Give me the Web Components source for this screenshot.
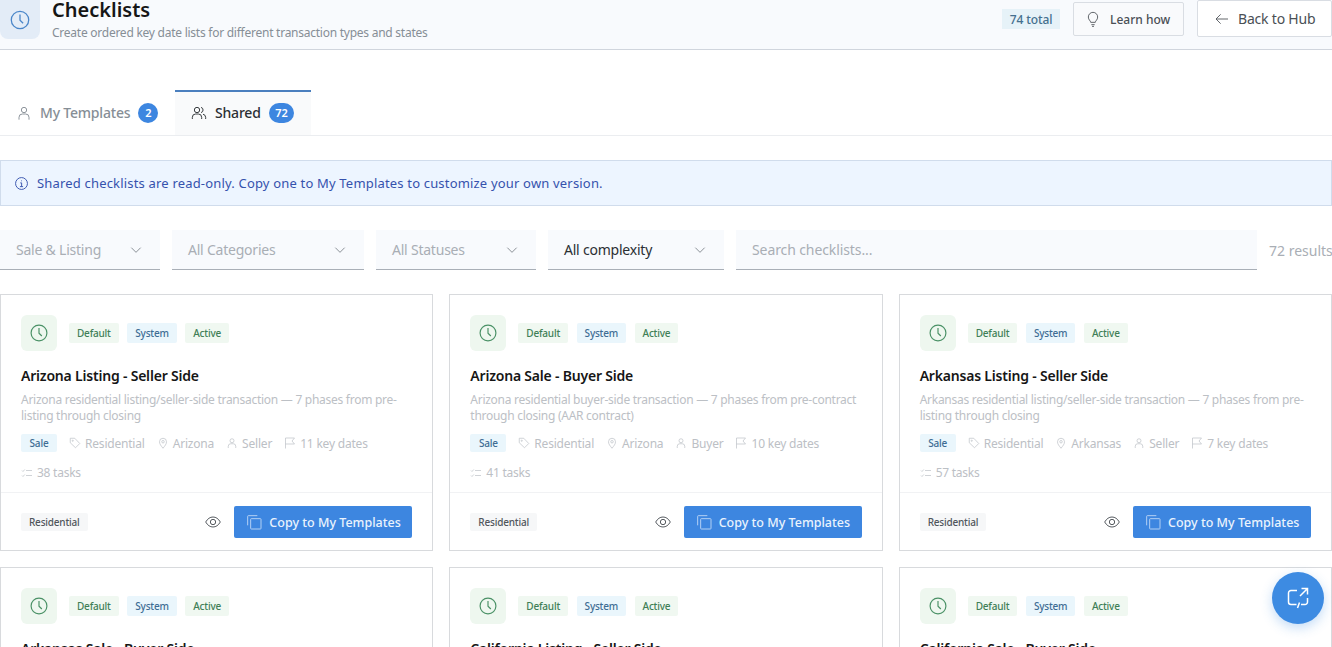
<!DOCTYPE html>
<html lang="en">
<head>
<meta charset="utf-8">
<title>Checklists</title>
<style>
html, body { margin: 0; height: 647px; overflow: hidden; background: #fff; }
body { font-family: "Noto Sans", "Inter", sans-serif; color: #161616; }
</style>
</head>
<body>
<checklists-page></checklists-page>
<script>
const ICONS = {
	clock: '<circle cx="12" cy="12" r="9.5"/><path d="M12 6v6.2l3.4 3.4"/>',
	user: '<circle cx="12" cy="7.5" r="4"/><path d="M4.5 22v-3.5a5 5 0 0 1 5-5h5a5 5 0 0 1 5 5V22"/>',
	users: '<circle cx="9" cy="7.5" r="4"/><path d="M2 21v-2.5a5 5 0 0 1 5-5h4a5 5 0 0 1 5 5V21"/><path d="M15 3.6a4 4 0 0 1 0 7.8"/><path d="M18 13.8a5 5 0 0 1 4 4.7V21"/>',
	info: '<circle cx="12" cy="12" r="9.5"/><path d="M12 7.2v1.2M10 11h2.2v6M9.5 17h5"/>',
	bulb: '<path d="M8.5 17c0-2.5-3.500-3.500-3.500-8a7 7 0 0 1 14 0c0 4.500-3.500 5.500-3.500 8z"/><path d="M9.5 20.500h5M10.500 23h3"/>',
	back: '<path d="M21 12H3.5M10 5l-7 7 7 7"/>',
	chevron: '<path d="M5 8.5l7 7 7-7"/>',
	tag: '<path d="M2.500 2.500h9L21.500 13l-8.500 8.500-10.500-10z"/><circle cx="7.500" cy="7.500" r="1.200"/>',
	pin: '<path d="M12 22.500c-4-5-7-8.500-7-13a7 7 0 0 1 14 0c0 4.500-3 8-7 13z"/><circle cx="12" cy="9.500" r="2.500"/>',
	flag: '<path d="M3 23V2h18l-5 6 5 6H3"/>',
	tasks: '<path d="M2 7l2 2 3.500-4M10 7h12M2 17l2 2 3.500-4M10 17h12"/>',
	eye: '<path d="M1 12c3-5 6.500-7.500 11-7.500S20 7 23 12c-3 5-6.500 7.500-11 7.500S4 17 1 12z"/><circle cx="12" cy="12" r="4"/>',
	copy: '<rect x="7" y="7" width="15.500" height="15.500" rx="1"/><path d="M2.500 17V3.500a1 1 0 0 1 1-1H17"/>',
	chat: '<path d="M11 4.500H5a2.500 2.500 0 0 0-2.500 2.500v9A2.500 2.500 0 0 0 5 18.500h5.500M15 18.500h4a2.500 2.500 0 0 0 2.500-2.500v-4"/><path d="M14 10l7.500-7.500M15.500 2.500h6v6M13.500 16.500L11.500 22"/>'
};

function icon(name, size, weight) {
	return `<svg width="${size}" height="${size}" viewBox="0 0 24 24" fill="none" stroke="currentColor" stroke-width="${weight || 1.5}" aria-hidden="true" style="flex:none">${ICONS[name]}</svg>`;
}

class AppHeader extends HTMLElement {
	constructor() {
		super();
		this.attachShadow({ mode: 'open' }).innerHTML = `
		<style>
		:host { display: flex; align-items: flex-start; height: 49px; background: #f8fafd; border-bottom: 1px solid #d0d5dd; box-sizing: content-box; overflow: hidden; white-space: nowrap; }
		.mark { width: 40px; height: 39px; background: #e3ecf7; border-radius: 0 0 8px 8px; color: #4a86c9; display: flex; align-items: center; justify-content: center; margin-right: 12px; flex: none; }
		.text { flex: 1; }
		h1 { margin: 0; font-size: 20px; line-height: 20px; font-weight: 600; color: #161616; }
		p { margin: 5px 0 0; font-size: 12px; line-height: 16px; letter-spacing: -.25px; color: #868e96; }
		.total { display: flex; align-items: center; width: 58px; height: 20px; justify-content: center; background: #e6f2f8; color: #44708f; font-size: 12px; margin: 9px 13px 0 0; font-weight: 500; letter-spacing: -.1px; }
		.btn { display: flex; align-items: center; background: #fff; border: 1px solid #d9dde3; color: #4a4f55; box-sizing: border-box; }
		.learn { height: 34px; width: 111px; margin: 2px 13px 0 0; padding-left: 11px; gap: 9px; font-size: 12px; border-radius: 2px; background: #f9fafc; font-weight: 500; }
		.hub { height: 37px; width: 135px; padding-left: 16px; gap: 8px; font-size: 14px; letter-spacing: -.2px; border-radius: 2px; }
		</style>
		<div class="mark">${icon('clock', 22, 1.4)}</div>
		<div class="text"><h1>Checklists</h1><p>Create ordered key date lists for different transaction types and states</p></div>
		<span class="total">74 total</span>
		<div class="btn learn">${icon('bulb', 16, 1.3)}<span>Learn how</span></div>
		<div class="btn hub">${icon('back', 16, 1.3)}<span>Back to Hub</span></div>`;
	}
}
customElements.define('app-header', AppHeader);

class TabBar extends HTMLElement {
	constructor() {
		super();
		this.attachShadow({ mode: 'open' }).innerHTML = `
		<style>
		:host { display: flex; height: 45px; margin-top: 40px; border-bottom: 1px solid #ebedf0; font-size: 14px; font-weight: 500; letter-spacing: -.2px; }
		.tab { display: flex; align-items: center; height: 45px; box-sizing: border-box; border-top: 2px solid transparent; padding-bottom: 2px; }
		.mine { width: 175px; padding-left: 16px; color: #868e96; gap: 8px; }
		.shared { width: 136px; padding-left: 16px; background: #f9fafb; border-top-color: #4a7fbe; color: #2b2f33; gap: 8px; }
		.count { background: #3d86e0; color: #fff; font-size: 11px; font-weight: 600; height: 20px; min-width: 20px; padding: 0 6.5px; box-sizing: border-box; border-radius: 10px; display: inline-flex; align-items: center; justify-content: center; letter-spacing: 0; }
		.mine .count { padding: 0 6px; }
		</style>
		<div class="tab mine">${icon('user', 16, 1.4)}<span>My Templates</span><span class="count">2</span></div>
		<div class="tab shared">${icon('users', 16, 1.4)}<span>Shared</span><span class="count">72</span></div>`;
	}
}
customElements.define('tab-bar', TabBar);

class InfoBanner extends HTMLElement {
	constructor() {
		super();
		this.attachShadow({ mode: 'open' }).innerHTML = `
		<style>
		:host { display: flex; align-items: center; gap: 8px; height: 46px; box-sizing: border-box; margin-top: 24px; padding-left: 13px; background: #edf5ff; border: 1px solid #d0dcec; color: #3552ad; font-size: 13px; letter-spacing: .18px; }
		</style>
		${icon('info', 15, 1.5)}<span><slot></slot></span>`;
	}
}
customElements.define('info-banner', InfoBanner);

class FilterSelect extends HTMLElement {
	constructor() {
		super();
		const w = this.getAttribute('width');
		this.attachShadow({ mode: 'open' }).innerHTML = `
		<style>
		:host { display: flex; align-items: center; justify-content: space-between; height: 40px; box-sizing: border-box; width: ${w}px; padding: 0 16px; background: #f8fafd; border-bottom: 1px solid #a9afb7; font-size: 14px; letter-spacing: -.22px; color: #a9aeb5; flex: none; }
		:host([active]) { color: #2b2f33; }
		svg { color: #6f757c; }
		</style>
		<span><slot></slot></span>${icon('chevron', 16, 1.2)}`;
	}
}
customElements.define('filter-select', FilterSelect);

class FilterBar extends HTMLElement {
	constructor() {
		super();
		this.attachShadow({ mode: 'open' }).innerHTML = `
		<style>
		:host { display: flex; gap: 12px; margin-top: 24px; align-items: center; font-size: 14px; white-space: nowrap; }
		.search { flex: none; width: 521px; height: 40px; box-sizing: border-box; display: flex; align-items: center; padding: 0 16px; background: #f8fafd; border-bottom: 1px solid #a9afb7; color: #a9aeb5; letter-spacing: -.1px; }
		.results { color: #a9aeb5; font-size: 14px; }
		</style>
		<slot></slot>
		<div class="search">Search checklists...</div>
		<span class="results">72 results</span>`;
	}
}
customElements.define('filter-bar', FilterBar);

class StatusTag extends HTMLElement {
	constructor() {
		super();
		this.attachShadow({ mode: 'open' }).innerHTML = `
		<style>
		:host { display: inline-flex; align-items: center; justify-content: center; height: 18px; padding: 0 8px; font-size: 10px; font-weight: 500; letter-spacing: -.2px; background: #f0f8f1; color: #3f7f57; border-radius: 2px; flex: none; }
		:host([kind=blue]) { background: #eaf6fc; color: #3e6d94; }
		:host([kind=gray]) { background: #f6f7f8; color: #50565c; }
		:host([tall]) { height: 20px; }
		:host([wide]) { width: 36px; padding: 0; }
		</style><slot></slot>`;
	}
}
customElements.define('status-tag', StatusTag);

class ChecklistCard extends HTMLElement {
	constructor() {
		super();
		const a = (n) => this.getAttribute(n);
		this.attachShadow({ mode: 'open' }).innerHTML = `
		<style>
		:host { display: block; height: 257px; box-sizing: border-box; background: #fff; border: 1px solid #d8dadd; color: #161616; overflow: hidden; }
		.top { display: flex; align-items: center; gap: 8.5px; padding: 20px 20px 0; }
		.mark { width: 36px; height: 36px; border-radius: 6px; background: #eef7ef; color: #4a9166; display: flex; align-items: center; justify-content: center; margin-right: 3.5px; }
		h3 { margin: 16px 20px 0; font-size: 14px; line-height: 18px; font-weight: 600; letter-spacing: -.2px; color: #161616; }
		.desc { margin: 7px 20px 0; font-size: 12px; line-height: 16px; letter-spacing: -.27px; color: #bcc0c5; height: 32px; }
		.meta { display: flex; align-items: center; gap: 12px; margin: 10px 20px 0; font-size: 12px; letter-spacing: -.2px; color: #bcc0c5; height: 18px; white-space: nowrap; }
		.meta span { display: inline-flex; align-items: center; gap: 4px; }
		.tasks { display: flex; align-items: center; gap: 4px; margin: 13px 20px 0; font-size: 12px; line-height: 16px; letter-spacing: -.25px; color: #bcc0c5; }
		.foot { display: flex; align-items: center; margin-top: 11px; border-top: 1px solid #f1f2f4; padding: 13px 20px 0; white-space: nowrap; }
		.eye { margin-left: auto; color: #3c4248; display: flex; margin-right: 13px; }
		.copy { display: flex; align-items: center; gap: 7px; width: 178px; height: 32px; box-sizing: border-box; padding-left: 12px; background: #3d86e0; color: #eaf3fd; font-size: 12.5px; font-weight: 500; border-radius: 2px; }
		.copy svg { color: #bcd6f5; }
		</style>
		<div class="top">
			<div class="mark">${icon('clock', 20, 1.4)}</div>
			<status-tag tall>Default</status-tag><status-tag kind="blue" tall>System</status-tag><status-tag tall>Active</status-tag>
		</div>
		<h3>${a('name')}</h3>
		<div class="desc">${a('desc')}</div>
		<div class="meta">
			<status-tag kind="blue" wide>Sale</status-tag>
			<span>${icon('tag', 12, 1.4)}Residential</span>
			<span>${icon('pin', 12, 1.4)}${a('state')}</span>
			<span>${icon('user', 12, 1.4)}${a('side')}</span>
			<span>${icon('flag', 12, 1.4)}${a('dates')} key dates</span>
		</div>
		<div class="tasks">${icon('tasks', 12, 1.4)}${a('tasks')} tasks</div>
		<div class="foot">
			<status-tag kind="gray">Residential</status-tag>
			<div class="eye">${icon('eye', 16, 1.3)}</div>
			<div class="copy">${icon('copy', 16, 1.4)}Copy to My Templates</div>
		</div>`;
	}
}
customElements.define('checklist-card', ChecklistCard);

class ChatFab extends HTMLElement {
	constructor() {
		super();
		this.attachShadow({ mode: 'open' }).innerHTML = `
		<style>
		:host { position: fixed; left: 1272px; top: 572px; width: 52px; height: 52px; border-radius: 50%; background: #3d8be2; color: #fff; display: flex; align-items: center; justify-content: center; box-shadow: 0 4px 12px rgba(61,139,226,.3); }
		</style>${icon('chat', 24, 1.5)}`;
	}
}
customElements.define('chat-fab', ChatFab);

class ChecklistsPage extends HTMLElement {
	constructor() {
		super();
		const cards = [
			['Arizona Listing - Seller Side', 'Arizona residential listing/seller-side transaction — 7 phases from pre-listing through closing', 'Arizona', 'Seller', 11, 38],
			['Arizona Sale - Buyer Side', 'Arizona residential buyer-side transaction — 7 phases from pre-contract through closing (AAR contract)', 'Arizona', 'Buyer', 10, 41],
			['Arkansas Listing - Seller Side', 'Arkansas residential listing/seller-side transaction — 7 phases from pre-listing through closing', 'Arkansas', 'Seller', 7, 57],
			['Arkansas Sale - Buyer Side', '', 'Arkansas', 'Buyer', 7, 50],
			['California Listing - Seller Side', '', 'California', 'Seller', 7, 50],
			['California Sale - Buyer Side', '', 'California', 'Buyer', 7, 50]
		];
		const cardHtml = cards.map((c) => `<checklist-card name="${c[0]}" desc="${c[1]}" state="${c[2]}" side="${c[3]}" dates="${c[4]}" tasks="${c[5]}"></checklist-card>`).join('');
		this.attachShadow({ mode: 'open' }).innerHTML = `
		<style>
		:host { display: block; height: 647px; overflow: hidden; }
		.grid { display: grid; grid-template-columns: repeat(3, 1fr); gap: 16px; margin-top: 24px; }
		</style>
		<app-header></app-header>
		<tab-bar></tab-bar>
		<info-banner>Shared checklists are read-only. Copy one to My Templates to customize your own version.</info-banner>
		<filter-bar>
			<filter-select width="160">Sale &amp; Listing</filter-select>
			<filter-select width="192">All Categories</filter-select>
			<filter-select width="160">All Statuses</filter-select>
			<filter-select width="176" active>All complexity</filter-select>
		</filter-bar>
		<div class="grid">${cardHtml}</div>
		<chat-fab></chat-fab>`;
	}
}
customElements.define('checklists-page', ChecklistsPage);
</script>
</body>
</html>
